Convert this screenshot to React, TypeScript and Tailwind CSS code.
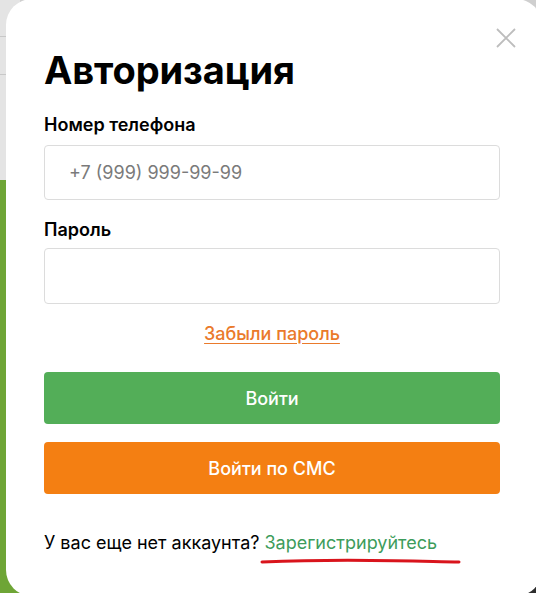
export default function App() {
  return (
    <div className="relative w-[536px] h-[593px] overflow-hidden bg-[#dedede]">
      {/* page behind the modal */}
      <div className="flex h-full">
        <div className="flex flex-col w-[20px]">
          <div className="h-[180px] bg-[#e4e4e4] flex flex-col">
            <div className="h-[37px] border-b border-[#c8c8c8]" />
            <div className="h-[38px] border-b border-[#c8c8c8]" />
          </div>
          <div className="flex-1 bg-[#6ea536]" />
        </div>
        <div className="flex-1 flex flex-col">
          <div className="flex-1 bg-[#cfcfcf]" />
          <div className="h-[40px] bg-[#2e2e2e]" />
        </div>
      </div>

      {/* modal */}
      <div
        className="absolute left-[6px] top-[-1px] w-[536px] h-[597px] bg-white rounded-[26px] pl-[38px] pr-[42px] pt-[50px] text-black"
        style={{ fontFamily: "Inter, 'Open Sans', sans-serif" }}
      >
        <button className="absolute right-[26px] top-[29px]">
          <svg width="20" height="20" viewBox="0 0 20 20">
            <path d="M1 1 L19 19 M19 1 L1 19" stroke="#bdbdbd" strokeWidth="1.8" />
          </svg>
        </button>

        <h1 className="text-[38px] leading-[42px] font-bold tracking-[-0.1px]">Авторизация</h1>

        <div className="mt-[24px] text-[18px] leading-[20px] font-semibold">Номер телефона</div>
        <input
          className="mt-[10px] w-full h-[55px] border border-[#dcdcdc] rounded-[4px] px-[24px] text-[18px] placeholder:text-[#7a7a7a] outline-none"
          placeholder="+7 (999) 999-99-99"
        />

        <div className="mt-[20px] text-[18px] leading-[20px] font-semibold">Пароль</div>
        <input
          type="password"
          className="mt-[8px] w-full h-[56px] border border-[#dcdcdc] rounded-[4px] px-[24px] text-[18px] outline-none"
        />

        <div className="mt-[18px] text-center">
          <a className="text-[18px] leading-[22px] font-medium text-[#ea7a2b] underline underline-offset-[3px]">
            Забыли пароль
          </a>
        </div>

        <button className="mt-[26px] w-full h-[52px] rounded-[4px] bg-[#53ae58] text-white text-[18px] font-medium">
          Войти
        </button>
        <button className="mt-[18px] w-full h-[52px] rounded-[4px] bg-[#f47f12] text-white text-[18px] font-medium">
          Войти по СМС
        </button>

        <div className="mt-[38px] text-[18px] leading-[22px]">
          У вас еще нет аккаунта?{" "}
          <a className="relative text-[#3d9c5b]">
            Зарегистрируйтесь
            <svg
              className="absolute left-[-5px] top-[25px]"
              width="202"
              height="8"
              viewBox="0 0 202 8"
            >
              <path
                d="M2 5 C 40 3.5, 90 3, 134 3.8 S 186 4.5, 199 5"
                stroke="#d9141c"
                strokeWidth="3"
                fill="none"
                strokeLinecap="round"
              />
            </svg>
          </a>
        </div>
      </div>
    </div>
  );
}
